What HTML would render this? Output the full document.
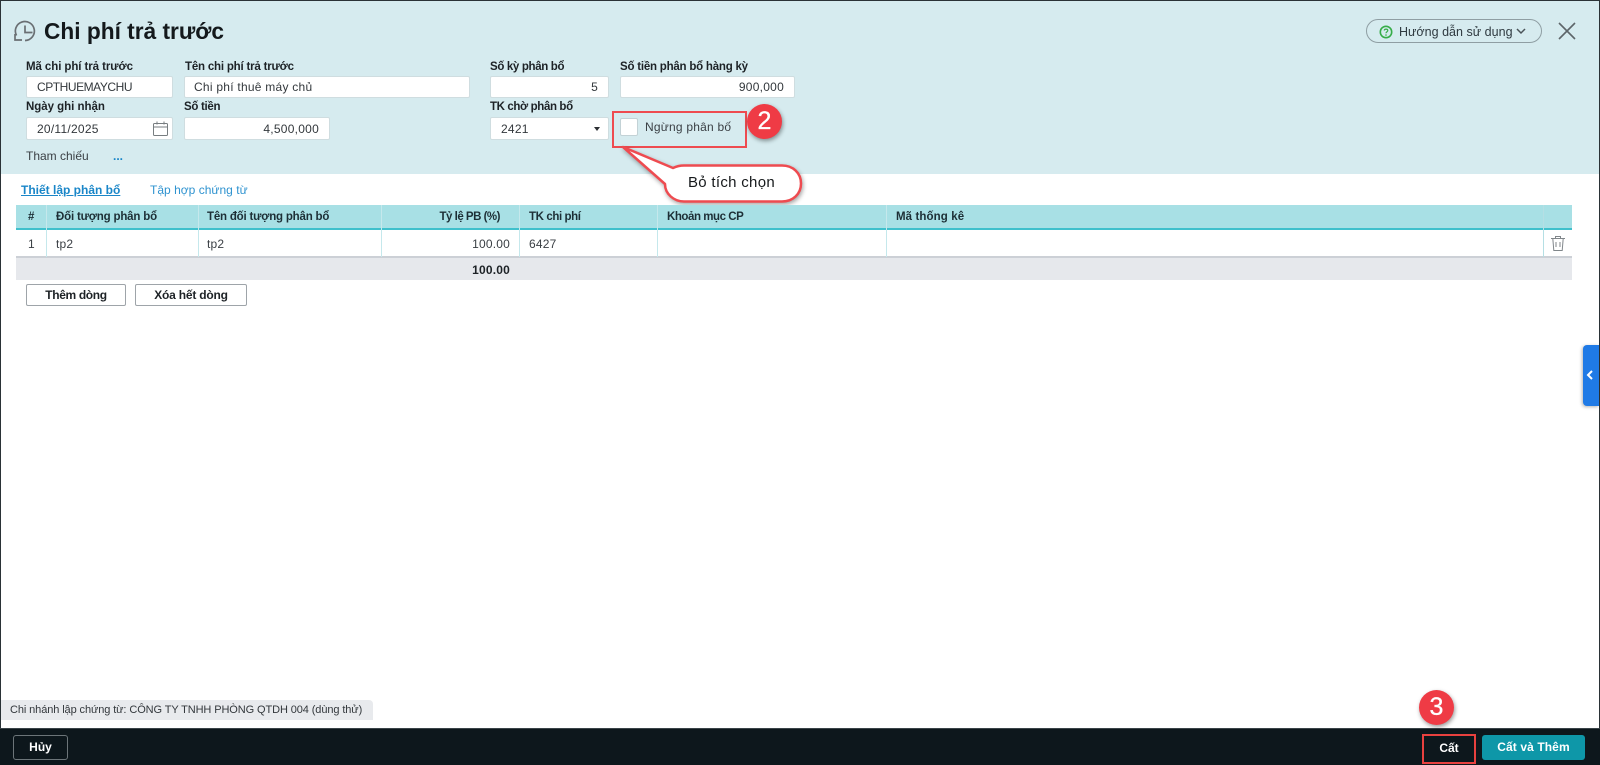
<!DOCTYPE html>
<html lang="vi"><head><meta charset="utf-8"><title>Chi phí trả trước</title>
<style>
*{box-sizing:border-box}
html,body{margin:0;padding:0}
body{width:1600px;height:765px;overflow:hidden;position:relative;background:#fff;font-family:"Liberation Sans",Arial,sans-serif;color:#2b2f33;font-size:12px}
.a{position:absolute}
.t{position:absolute;white-space:nowrap;line-height:16px;height:16px}
.l{font-size:11.5px;font-weight:700;color:#1d2226}
.i{position:absolute;background:#fff;border:1px solid #cfdde0;border-radius:2px;height:22px;line-height:21px;padding:0 10px;font-size:12px;color:#33383c;letter-spacing:.25px;white-space:nowrap}
.r{text-align:right}
.h{font-size:11.5px;font-weight:700;color:#1d2f36}
.c{font-size:12px;color:#3a3f44;letter-spacing:.2px}
.v{position:absolute;width:1px;background:#c5e8ec}
.btn{position:absolute;background:#fff;border:1px solid #9ea4a9;border-radius:2px;height:22px;line-height:20px;text-align:center;font-weight:700;font-size:12px;color:#1d2226}
.num{position:absolute;width:35px;height:35px;border-radius:50%;background:#ef3b45;color:#fff;text-align:center;font-size:25px;line-height:35px;-webkit-text-stroke:.3px #fff;box-shadow:1px 2px 4px rgba(0,0,0,.4)}
</style></head><body>
<div class="a" style="left:0;top:0;width:1600px;height:174px;background:#d6ebef"></div>
<div class="a" style="left:0;top:0;width:1600px;height:1px;background:#2a3236"></div>
<div class="a" style="left:0;top:0;width:1px;height:765px;background:#2a3236"></div>
<div class="a" style="left:1599px;top:0;width:1px;height:765px;background:#2a3236"></div>

<svg class="a" style="left:13px;top:20px" width="24" height="24" viewBox="0 0 24 24" fill="none" stroke="#6a6f73" stroke-width="1.700"><path d="M3.500 15.500A9.500 9.500 0 1 1 12 20.500"/><path d="M12 5.500V12.500H19.500"/><path d="M2 14V20H9"/></svg>
<div class="t" style="left:44px;top:17px;height:28px;line-height:28px;font-size:22.700px;font-weight:700;color:#14191c">Chi phí trả trước</div>

<div class="t l" style="left:26px;top:59px;letter-spacing:-.08px">Mã chi phí trả trước</div>
<div class="t l" style="left:185px;top:59px;letter-spacing:-.2px">Tên chi phí trả trước</div>
<div class="t l" style="left:490px;top:59px;letter-spacing:-.34px">Số kỳ phân bổ</div>
<div class="t l" style="left:620px;top:59px;letter-spacing:-.22px">Số tiền phân bổ hàng kỳ</div>
<div class="i" style="left:26px;top:76px;width:147px;letter-spacing:-.45px">CPTHUEMAYCHU</div>
<div class="i" style="left:184px;top:76px;width:286px;padding-left:9px">Chi phí thuê máy chủ</div>
<div class="i r" style="left:490px;top:76px;width:119px">5</div>
<div class="i r" style="left:620px;top:76px;width:175px">900,000</div>

<div class="t l" style="left:26px;top:99px;letter-spacing:-.03px">Ngày ghi nhận</div>
<div class="t l" style="left:184px;top:99px;letter-spacing:-.3px">Số tiền</div>
<div class="t l" style="left:490px;top:99px;letter-spacing:-.38px">TK chờ phân bổ</div>
<div class="i" style="left:26px;top:117px;width:147px;height:23px;line-height:22px">20/11/2025</div>
<svg class="a" style="left:152px;top:120px" width="17" height="17" viewBox="0 0 17 17" fill="none" stroke="#777d80" stroke-width="1"><rect x="1.500" y="3.500" width="14" height="12" rx="1"/><path d="M1.500 7H15.500M5 1.500V4.500M12 1.500V4.500"/></svg>
<div class="i r" style="left:184px;top:117px;width:146px;height:23px;line-height:22px">4,500,000</div>
<div class="i" style="left:490px;top:117px;width:119px;height:23px;line-height:22px">2421</div>
<div class="a" style="left:594px;top:127px;border-left:3.500px solid transparent;border-right:3.500px solid transparent;border-top:4px solid #2b2f33"></div>

<div class="a" style="left:620px;top:118px;width:18px;height:18px;background:#fff;border:1px solid #c3d2d6;border-radius:2px"></div>
<div class="t" style="left:645px;top:119px;font-size:12px;color:#3a3f44;letter-spacing:.22px">Ngừng phân bố</div>
<div class="a" style="left:612px;top:111px;width:135px;height:37px;border:2.500px solid #ee4b50"></div>
<div class="t" style="left:26px;top:148px;font-size:12px;color:#3a3f44">Tham chiếu</div>
<div class="t" style="left:113px;top:148px;font-size:12px;font-weight:700;color:#1a86c8">...</div>

<svg class="a" style="left:610px;top:140px;filter:drop-shadow(1px 2px 2px rgba(0,0,0,.35))" width="200" height="70" viewBox="0 0 200 70"><path d="M13 7L63 28C67 26 70 25.500 74 25.500H172C183 25.500 191 33 191 43.500C191 54 183 61.500 172 61.500H74C64 61.500 55 54 55 44Z" fill="#fff" stroke="#ee4b50" stroke-width="2.500" stroke-linejoin="round"/></svg>
<div class="t" style="left:688px;top:174px;height:18px;line-height:18px;font-size:15px;color:#16191b;letter-spacing:.3px">Bỏ tích chọn</div>
<div class="num" style="left:747px;top:104px">2</div>

<div class="a" style="left:1366px;top:19px;width:176px;height:24px;border:1px solid #8f9ea3;border-radius:12px"></div>
<svg class="a" style="left:1379px;top:25px" width="14" height="14" viewBox="0 0 14 14" fill="none"><circle cx="7" cy="7" r="5.700" stroke="#36ad48" stroke-width="1.600"/><path d="M5.300 5.500C5.300 3.700 8.800 3.700 8.800 5.500C8.800 6.800 7 6.700 7 8.300" stroke="#36ad48" stroke-width="1.200"/><circle cx="7" cy="10" r=".8" fill="#36ad48"/></svg>
<div class="t" style="left:1399px;top:24px;font-size:12.500px;color:#2f3a40;letter-spacing:.02px">Hướng dẫn sử dụng</div>
<svg class="a" style="left:1516px;top:27px" width="10" height="8" viewBox="0 0 10 8" fill="none" stroke="#4a5358" stroke-width="1.500"><path d="M1 2L5 6L9 2"/></svg>
<svg class="a" style="left:1558px;top:22px" width="18" height="18" viewBox="0 0 18 18" fill="none" stroke="#5d6569" stroke-width="1.600"><path d="M1 1L17 17M17 1L1 17"/></svg>

<div class="t" style="left:21px;top:182px;font-size:12px;font-weight:700;color:#1a86c8;text-decoration:underline">Thiết lập phân bổ</div>
<div class="t" style="left:150px;top:182px;font-size:12px;color:#2f93d0;letter-spacing:.02px">Tập hợp chứng từ</div>

<div class="a" style="left:16px;top:205px;width:1556px;height:25px;background:#a8e0e5;border-bottom:2px solid #3fc0cc"></div>
<div class="a" style="left:16px;top:230px;width:1556px;height:28px;background:#fff;border-bottom:2px solid #ccd0d6"></div>
<div class="a" style="left:16px;top:258px;width:1556px;height:22px;background:#e6e8ec"></div>
<div class="v" style="left:46px;top:205px;height:52px"></div>
<div class="v" style="left:198px;top:205px;height:52px"></div>
<div class="v" style="left:381px;top:205px;height:52px"></div>
<div class="v" style="left:519px;top:205px;height:52px"></div>
<div class="v" style="left:657px;top:205px;height:52px"></div>
<div class="v" style="left:886px;top:205px;height:52px"></div>
<div class="v" style="left:1543px;top:205px;height:52px;background:#b5dfe4"></div>

<div class="t h" style="left:28px;top:209px">#</div>
<div class="t h" style="left:56px;top:209px;letter-spacing:-.18px">Đối tượng phân bổ</div>
<div class="t h" style="left:207px;top:209px;letter-spacing:-.2px">Tên đối tượng phân bổ</div>
<div class="t h r" style="left:400px;width:100px;top:209px;letter-spacing:-.5px">Tỷ lệ PB (%)</div>
<div class="t h" style="left:529px;top:209px;letter-spacing:-.4px">TK chi phí</div>
<div class="t h" style="left:667px;top:209px;letter-spacing:-.45px">Khoản mục CP</div>
<div class="t h" style="left:896px;top:209px;letter-spacing:.1px">Mã thống kê</div>

<div class="t c" style="left:28px;top:236px">1</div>
<div class="t c" style="left:56px;top:236px">tp2</div>
<div class="t c" style="left:207px;top:236px">tp2</div>
<div class="t c r" style="left:430px;width:80px;top:236px">100.00</div>
<div class="t c" style="left:529px;top:236px">6427</div>
<svg class="a" style="left:1550px;top:235px" width="16" height="17" viewBox="0 0 16 17" fill="none" stroke="#80868a" stroke-width="1"><path d="M1 3.500H15M5.500 3.500V1.500H10.500V3.500M2.800 3.500L3.800 15.500H12.200L13.200 3.500M6 7V12M10 7V12"/></svg>
<div class="t r" style="left:430px;width:80px;top:262px;font-size:12px;font-weight:700;color:#1d2226;letter-spacing:.2px">100.00</div>

<div class="btn" style="left:26px;top:284px;width:100px;letter-spacing:-.35px">Thêm dòng</div>
<div class="btn" style="left:135px;top:284px;width:112px;letter-spacing:-.2px">Xóa hết dòng</div>

<div class="a" style="left:1583px;top:345px;width:16px;height:61px;background:#1f7ae6;border-radius:4px 0 0 4px;box-shadow:-1px 1px 3px rgba(0,0,0,.3)"></div>
<svg class="a" style="left:1586px;top:370px" width="8" height="10" viewBox="0 0 8 10" fill="none" stroke="#fff" stroke-width="2"><path d="M6 1L2 5L6 9"/></svg>

<div class="a" style="left:1px;top:700px;width:372px;height:20px;background:#e8eaed;border-radius:0 4px 0 0"></div>
<div class="t" style="left:10px;top:702px;font-size:11px;color:#33383c;letter-spacing:-.1px">Chi nhánh lập chứng từ: CÔNG TY TNHH PHÒNG QTDH 004 (dùng thử)</div>

<div class="a" style="left:0;top:728px;width:1600px;height:37px;background:#0d171c;border-top:1px solid #3a4348"></div>
<div class="a" style="left:13px;top:735px;width:55px;height:25px;border:1px solid #6c7579;border-radius:3px;text-align:center;line-height:23px;color:#fff;font-weight:700;font-size:12px">Hủy</div>
<div class="a" style="left:1422px;top:734px;width:54px;height:30px;border:2.500px solid #e8413f;text-align:center;line-height:24px;color:#fff;font-weight:700;font-size:12px">Cất</div>
<div class="a" style="left:1482px;top:735px;width:103px;height:25px;background:#0e97a8;border-radius:3px;text-align:center;line-height:25px;color:#fff;font-weight:700;font-size:12px;letter-spacing:.1px">Cất và Thêm</div>
<div class="num" style="left:1419px;top:690px">3</div>
</body></html>
